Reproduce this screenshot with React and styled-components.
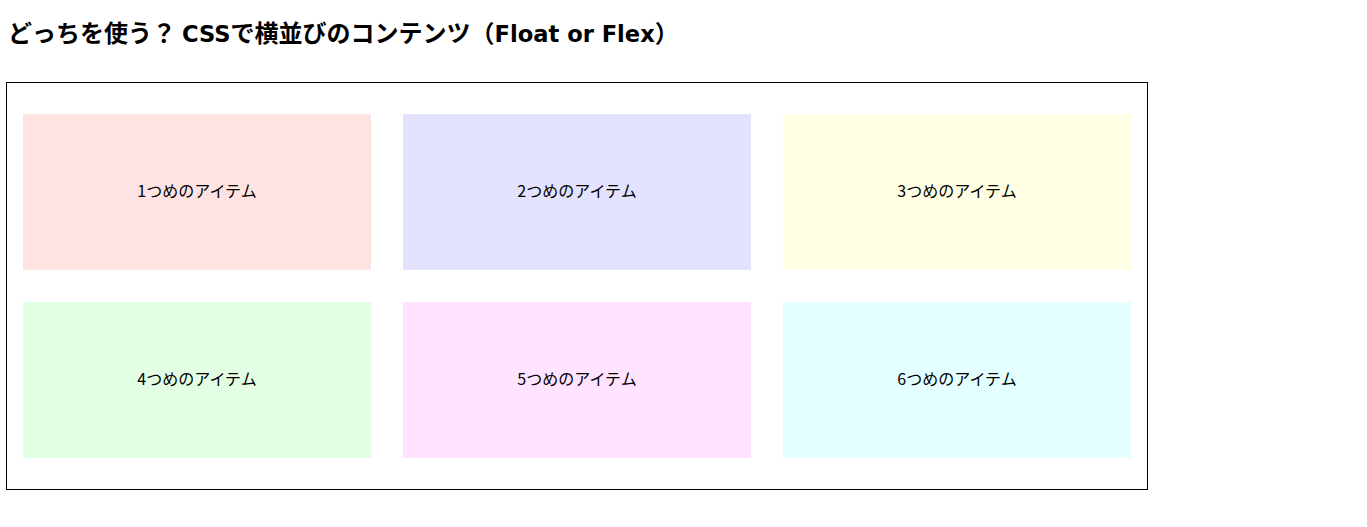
import React from "react";
import styled, { createGlobalStyle } from "styled-components";

const GlobalStyle = createGlobalStyle`
  body {
    margin: 0;
    background: #fff;
    color: #000;
    font-family: "Noto Sans CJK JP", "DejaVu Sans", sans-serif;
  }
`;

const items = [
  { label: "1つめのアイテム", color: "#ffe3e3" },
  { label: "2つめのアイテム", color: "#e3e3ff" },
  { label: "3つめのアイテム", color: "#ffffe3" },
  { label: "4つめのアイテム", color: "#e3ffe3" },
  { label: "5つめのアイテム", color: "#ffe3ff" },
  { label: "6つめのアイテム", color: "#e3ffff" },
];

const App = () => {
  return (
    <Page>
      <GlobalStyle />
      <Title>
        どっちを使う？<Latin $gap={6}>CSS</Latin>で横並びのコンテンツ（
        <Latin>Float or Flex</Latin>）
      </Title>
      <Container>
        {items.map((item) => (
          <Item key={item.label} bg={item.color}>
            {item.label}
          </Item>
        ))}
      </Container>
    </Page>
  );
};

const Page = styled.div`
  padding: 16px 6px;
`;

const Title = styled.h1`
  height: 32px;
  margin: 0 0 34px 2px;
  font-size: 24px;
  font-weight: bold;
  line-height: 32px;
  white-space: nowrap;
`;

const Latin = styled.span`
  margin-left: ${(props) => props.$gap || 0}px;
  font-family: "DejaVu Sans", sans-serif;
  font-size: 22.6px;
  line-height: 1;
`;

const Container = styled.div`
  box-sizing: border-box;
  width: 1142px;
  border: 1px solid #000;
  padding: 31px 16px;
  display: grid;
  grid-template-columns: repeat(3, 348px);
  column-gap: 32px;
  row-gap: 32px;
`;

const Item = styled.div`
  box-sizing: border-box;
  height: 156px;
  padding-bottom: 4px;
  background-color: ${(props) => props.bg};
  display: flex;
  align-items: center;
  justify-content: center;
  font-size: 16px;
`;

export default App;
